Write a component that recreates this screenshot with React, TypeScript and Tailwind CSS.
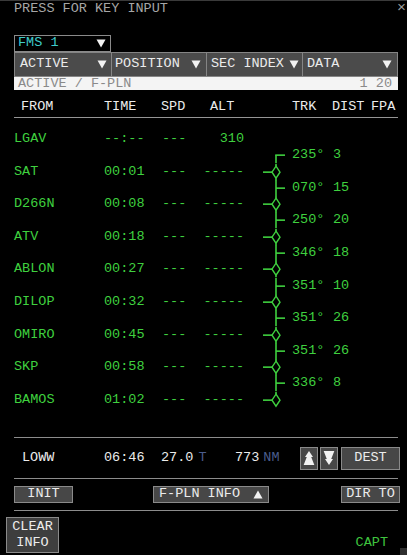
import React from "react";

const G = "#3fd03f";

type Wp = { id: string; time: string; spd: string; alt: string };
const wps: Wp[] = [
  { id: "LGAV", time: "--:--", spd: "---", alt: "310" },
  { id: "SAT", time: "00:01", spd: "---", alt: "-----" },
  { id: "D266N", time: "00:08", spd: "---", alt: "-----" },
  { id: "ATV", time: "00:18", spd: "---", alt: "-----" },
  { id: "ABLON", time: "00:27", spd: "---", alt: "-----" },
  { id: "DILOP", time: "00:32", spd: "---", alt: "-----" },
  { id: "OMIRO", time: "00:45", spd: "---", alt: "-----" },
  { id: "SKP", time: "00:58", spd: "---", alt: "-----" },
  { id: "BAMOS", time: "01:02", spd: "---", alt: "-----" },
];
const legs: [string, string][] = [
  ["235°", "3"],
  ["070°", "15"],
  ["250°", "20"],
  ["346°", "18"],
  ["351°", "10"],
  ["351°", "26"],
  ["351°", "26"],
  ["336°", "8"],
];

const H = 16.3;
const C = H / 2;

function Tri({ up = false }: { up?: boolean }) {
  return (
    <svg width={10} height={9} viewBox="0 0 10 9" className="shrink-0">
      {up ? (
        <polygon points="5,0.5 9.5,8.5 0.5,8.5" fill="#f2f2f2" />
      ) : (
        <polygon points="0.5,0.5 9.5,0.5 5,8.5" fill="#f2f2f2" />
      )}
    </svg>
  );
}

function Graph({ kind }: { kind: "none" | "firstLeg" | "leg" | "wp" | "lastWp" }) {
  return (
    <svg width={24} height={H} viewBox={`0 0 24 ${H}`} className="shrink-0 overflow-visible">
      {kind === "firstLeg" && (
        <>
          <line x1={14} y1={C} x2={14} y2={H} stroke={G} strokeWidth={1.6} />
          <line x1={13.2} y1={C} x2={23} y2={C} stroke={G} strokeWidth={1.6} />
        </>
      )}
      {kind === "leg" && (
        <>
          <line x1={14} y1={0} x2={14} y2={H} stroke={G} strokeWidth={1.6} />
          <line x1={14} y1={C} x2={23} y2={C} stroke={G} strokeWidth={1.6} />
        </>
      )}
      {(kind === "wp" || kind === "lastWp") && (
        <>
          <line x1={14} y1={0} x2={14} y2={C - 6} stroke={G} strokeWidth={1.6} />
          <polygon
            points={`14,${C - 6} 18,${C} 14,${C + 6} 10,${C}`}
            fill="none"
            stroke={G}
            strokeWidth={1.4}
          />
          <line x1={1} y1={C} x2={10} y2={C} stroke={G} strokeWidth={1.6} />
          {kind === "wp" && (
            <line x1={14} y1={C + 6} x2={14} y2={H} stroke={G} strokeWidth={1.6} />
          )}
        </>
      )}
    </svg>
  );
}

function Arrow({ up }: { up: boolean }) {
  const pts = "9,3 13.5,10 11.5,10 15,19 3,19 6.5,10 4.5,10";
  return (
    <svg width={18} height={22} viewBox="0 0 18 22">
      <polygon points={pts} fill="#f2f2f2" transform={up ? undefined : "rotate(180 9 11)"} />
    </svg>
  );
}

export default function App() {
  const rows: React.ReactNode[] = [];
  wps.forEach((w, i) => {
    rows.push(
      <div key={`w${i}`} className="flex items-center pl-[14px]" style={{ height: H }}>
        <span className="w-[90px]" style={{ color: G }}>{w.id}</span>
        <span className="w-[58px]" style={{ color: G }}>{w.time}</span>
        <span className="w-[41px]" style={{ color: G }}>{w.spd}</span>
        <span className="w-[41px] text-right" style={{ color: G }}>{w.alt}</span>
        <span className="w-[18px]" />
        <Graph kind={i === 0 ? "none" : i === wps.length - 1 ? "lastWp" : "wp"} />
      </div>
    );
    if (i < legs.length) {
      rows.push(
        <div key={`l${i}`} className="flex items-center pl-[262px]" style={{ height: H }}>
          <Graph kind={i === 0 ? "firstLeg" : "leg"} />
          <span className="ml-[6px] w-[41px]" style={{ color: G }}>{legs[i][0]}</span>
          <span style={{ color: G }}>{legs[i][1]}</span>
        </div>
      );
    }
  });

  return (
    <div
      className="relative flex h-[555px] w-[407px] flex-col overflow-hidden border-t border-[#3a3a3a] bg-black text-[13.5px] leading-[16.3px]"
      style={{ fontFamily: '"Liberation Mono", "DejaVu Sans Mono", monospace' }}
    >
      {/* title */}
      <div className="flex h-[16px] items-center justify-between pl-[14px] text-[#a6a6a6]">
        <span>PRESS FOR KEY INPUT</span>
        <span className="mr-[1px] text-[15px] text-[#9a9a9a]">×</span>
      </div>

      {/* FMS selector */}
      <div className="ml-[14px] mt-[18px] flex h-[17px] w-[97px] items-center justify-between border border-[#8a8a8a] pl-[3px] pr-[4px]">
        <span className="text-[#3ecbcb]">FMS 1</span>
        <Tri />
      </div>

      {/* tabs */}
      <div className="ml-[14px] flex h-[25px] w-[384px] border border-[#858585] bg-[#4b4b4b] text-[#ececec]">
        <div className="flex w-[96px] items-center justify-between pl-[5px] pr-[4px]">
          <span>ACTIVE</span>
          <Tri />
        </div>
        <div className="flex w-[95px] items-center justify-between border-l border-[#858585] pl-[3px] pr-[5px]">
          <span>POSITION</span>
          <Tri />
        </div>
        <div className="flex w-[96px] items-center justify-between border-l border-[#858585] pl-[4px] pr-[3px]">
          <span>SEC INDEX</span>
          <Tri />
        </div>
        <div className="flex flex-1 items-center justify-between border-l border-[#858585] pl-[4px] pr-[5px]">
          <span>DATA</span>
          <Tri />
        </div>
      </div>

      {/* white bar */}
      <div className="ml-[14px] flex h-[13px] w-[384px] items-center justify-between bg-[#f4f4f4] pl-[4px] pr-[6px] leading-[13px] text-[#8a8a8a]">
        <span>ACTIVE / F-PLN</span>
        <span>1 20</span>
      </div>

      {/* header */}
      <div className="flex h-[27px] items-center pl-[21px] pt-[7px] text-[#ececec]">
        <span className="w-[83px]">FROM</span>
        <span className="w-[57px]">TIME</span>
        <span className="w-[49px]">SPD</span>
        <span className="w-[82px]">ALT</span>
        <span className="w-[40px]">TRK</span>
        <span className="w-[39px]">DIST</span>
        <span>FPA</span>
      </div>
      <div className="ml-[14px] h-[1px] w-[384px] bg-[#959595]" />

      {/* flight plan */}
      <div className="mt-[13px] flex flex-col">{rows}</div>

      <div className="ml-[14px] mt-[29px] h-[1px] w-[384px] bg-[#8c8c8c]" />

      {/* destination */}
      <div className="flex h-[40px] items-center pl-[22px] text-[#ececec]">
        <span className="w-[82px]">LOWW</span>
        <span className="w-[57px]">06:46</span>
        <span className="flex w-[74px]">
          <span>27.0</span>
          <span className="ml-[5px] text-[#4a5c8c]">T</span>
        </span>
        <span>773</span>
        <span className="ml-[4px] text-[#4a5c8c]">NM</span>
        <div className="ml-auto mr-[7px] flex items-center">
          <div className="flex h-[23px] w-[18px] items-center justify-center border border-[#8a8a8a] bg-[#474747]">
            <Arrow up />
          </div>
          <div className="ml-[2px] flex h-[23px] w-[18px] items-center justify-center border border-[#8a8a8a] bg-[#474747]">
            <Arrow up={false} />
          </div>
          <div className="ml-[3px] flex h-[23px] w-[59px] items-center justify-center border border-[#8a8a8a] bg-[#474747]">
            DEST
          </div>
        </div>
      </div>
      <div className="ml-[14px] h-[1px] w-[384px] bg-[#8c8c8c]" />

      {/* buttons */}
      <div className="flex h-[31px] items-center pl-[14px] text-[#ececec]">
        <div className="flex h-[17px] w-[59px] items-center justify-center border border-[#8a8a8a] bg-[#474747]">
          INIT
        </div>
        <div className="ml-[80px] flex h-[17px] w-[116px] items-center justify-center gap-[13px] border border-[#8a8a8a] bg-[#474747]">
          <span>F-PLN INFO</span>
          <Tri up />
        </div>
        <div className="ml-[72px] flex h-[17px] w-[59px] items-center justify-center border border-[#8a8a8a] bg-[#474747]">
          DIR TO
        </div>
      </div>
      <div className="ml-[14px] h-[1px] w-[384px] bg-[#8c8c8c]" />

      {/* bottom */}
      <div className="flex flex-1 items-start pt-[6px]">
        <div className="ml-[6px] flex h-[36px] w-[53px] flex-col items-center justify-center border border-[#8a8a8a] bg-[#3e3e3e] text-[#ececec]">
          <span>CLEAR</span>
          <span>INFO</span>
        </div>
        <span className="ml-auto mr-[19px] mt-[18px] text-[#3fc43f]">CAPT</span>
      </div>

      <div className="absolute bottom-0 right-0 h-[7px] w-[7px] bg-[#2e2e2e]" />
    </div>
  );
}
